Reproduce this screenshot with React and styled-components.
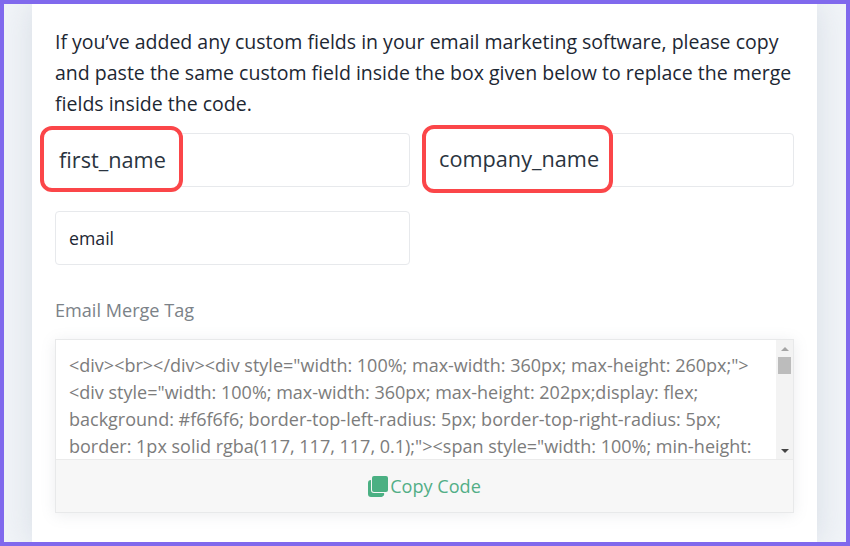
import React from "react";
import styled, { createGlobalStyle } from "styled-components";

const GlobalStyle = createGlobalStyle`
  html, body {
    margin: 0;
    padding: 0;
    background: #ffffff;
  }
  * {
    box-sizing: border-box;
  }
`;

const Frame = styled.div`
  width: 850px;
  height: 546px;
  border: 4px solid #8069ed;
  background: #f1f4f8;
  padding: 0 29px 0 28px;
  overflow: hidden;
  font-family: "Open Sans", "Noto Sans", sans-serif;
`;

const Card = styled.div`
  height: 100%;
  background: #ffffff;
  padding: 22px 23px 0 23px;
  box-shadow: 0 0 30px rgba(190, 200, 212, 0.5);
`;

const Intro = styled.p`
  margin: 0;
  font-size: 19.53px;
  line-height: 31px;
  color: #1d2733;
  white-space: nowrap;
`;

const FieldGrid = styled.div`
  display: grid;
  grid-template-columns: 355px 356px;
  column-gap: 28px;
  row-gap: 24px;
  margin-top: 14px;
`;

const Field = styled.div`
  position: relative;
  height: 54px;
  border: 1px solid #e7e9ec;
  border-radius: 4px;
  padding-left: 13px;
  display: flex;
  align-items: center;
  font-size: 17.7px;
  color: #1d2733;
`;

const Callout = styled.div`
  position: absolute;
  left: ${(p) => p.$left}px;
  top: ${(p) => p.$top}px;
  width: ${(p) => p.$width}px;
  height: ${(p) => p.$height}px;
  padding-left: ${(p) => p.$pad}px;
  padding-bottom: ${(p) => p.$lift || 0}px;
  display: flex;
  align-items: center;
  background: #ffffff;
  border: 4px solid #fb4649;
  border-radius: 12px;
  font-size: 21.7px;
  color: #2a3440;
`;

const Label = styled.div`
  margin-top: 32px;
  font-size: 18.1px;
  line-height: 27px;
  color: #7b8288;
`;

const CodeBox = styled.div`
  margin-top: 15px;
  height: 174px;
  border: 1px solid #e8e9ea;
  background: #ffffff;
  box-shadow: 0 2px 14px rgba(120, 130, 140, 0.14);
  display: flex;
  flex-direction: column;
`;

const CodeArea = styled.div`
  height: 120px;
  display: flex;
  border-bottom: 1px solid #ebebeb;
  overflow: hidden;
`;

const CodeText = styled.div`
  flex: 1;
  padding: 12px 0 0 13px;
  font-size: 18px;
  line-height: 27px;
  color: #7c7c7c;
  white-space: pre;
  overflow: hidden;
`;

const Scrollbar = styled.div`
  width: 17px;
  background: #f3f3f3;
  display: flex;
  flex-direction: column;
  align-items: center;
`;

const ScrollArrow = styled.div`
  width: 0;
  height: 0;
  margin-top: ${(p) => p.$mt}px;
  border-left: 4px solid transparent;
  border-right: 4px solid transparent;
  ${(p) => (p.$down ? "border-top: 4px solid #444;" : "border-bottom: 4px solid #a5a5a5;")}
`;

const ScrollThumb = styled.div`
  width: 13px;
  height: 17px;
  margin-top: 6px;
  background: #bcbcbc;
`;

const CopyBar = styled.div`
  flex: 1;
  background: #f7f7f7;
  display: flex;
  align-items: center;
  justify-content: center;
  gap: 2px;
  font-size: 18.1px;
  color: #52ae86;
`;

const CopyIcon = () => (
  <svg width="20" height="21" viewBox="0 0 20 21">
    <path d="M0 7a3 3 0 0 1 3-3v10a3 3 0 0 0 3 3h10a3 3 0 0 1-3 4H3a3 3 0 0 1-3-3z" fill="#4bb083" />
    <rect x="4" y="0" width="16" height="16" rx="2" fill="#4bb083" />
  </svg>
);

const codeLines = [
  '<div><br></div><div style="width: 100%; max-width: 360px; max-height: 260px;">',
  '<div style="width: 100%; max-width: 360px; max-height: 202px;display: flex;',
  "background: #f6f6f6; border-top-left-radius: 5px; border-top-right-radius: 5px;",
  'border: 1px solid rgba(117, 117, 117, 0.1);"><span style="width: 100%; min-height:',
];

export default function App() {
  return (
    <>
      <GlobalStyle />
      <Frame>
        <Card>
          <Intro>
            If you’ve added any custom fields in your email marketing software, please copy
            <br />
            and paste the same custom field inside the box given below to replace the merge
            <br />
            fields inside the code.
          </Intro>
          <FieldGrid>
            <Field>
              <Callout $left={-16} $top={-8} $width={143} $height={66} $pad={15}>
                first_name
              </Callout>
            </Field>
            <Field>
              <Callout $left={-17} $top={-9} $width={191} $height={68} $pad={13} $lift={2}>
                company_name
              </Callout>
            </Field>
            <Field>email</Field>
          </FieldGrid>
          <Label>Email Merge Tag</Label>
          <CodeBox>
            <CodeArea>
              <CodeText>{codeLines.join("\n")}</CodeText>
              <Scrollbar>
                <ScrollArrow $mt={7} />
                <ScrollThumb />
                <ScrollArrow $down $mt={75} />
              </Scrollbar>
            </CodeArea>
            <CopyBar>
              <CopyIcon />
              Copy Code
            </CopyBar>
          </CodeBox>
        </Card>
      </Frame>
    </>
  );
}
